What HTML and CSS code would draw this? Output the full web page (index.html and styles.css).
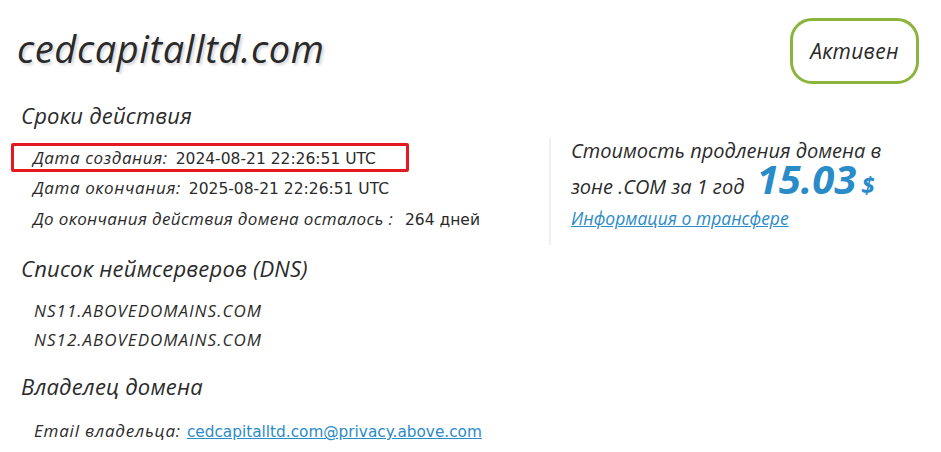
FILE: index.html
```html
<!DOCTYPE html>
<html lang="ru">
<head>
<meta charset="utf-8">
<title>cedcapitalltd.com</title>
<link rel="stylesheet" href="styles.css">
</head>
<body>
<div class="page">
  <header class="header">
    <h1 class="title">cedcapitalltd.com</h1>
    <div class="badge">Активен</div>
  </header>

  <h2 class="section-title section-first">Сроки действия</h2>
  <div class="terms">
    <div class="terms-left">
      <div class="row row-hl"><span class="label">Дата создания:</span><span class="value">2024-08-21 22:26:51 UTC</span></div>
      <div class="row"><span class="label">Дата окончания:</span><span class="value">2025-08-21 22:26:51 UTC</span></div>
      <div class="row"><span class="label label-tight">До окончания действия домена осталось :</span><span class="value">264 дней</span></div>
    </div>
    <div class="terms-right">
      <p class="price-text price-first">Стоимость продления домена в</p>
      <p class="price-text price-second">зоне .COM за 1 год <span class="price">15.03</span><span class="currency">$</span></p>
      <a class="transfer" href="#">Информация о трансфере</a>
    </div>
  </div>

  <h2 class="section-title">Список неймсерверов (DNS)</h2>
  <div class="ns-list">
    <div class="ns">NS11.ABOVEDOMAINS.COM</div>
    <div class="ns">NS12.ABOVEDOMAINS.COM</div>
  </div>

  <h2 class="section-title">Владелец домена</h2>
  <div class="owner">
    <span class="label label-wide">Email владельца:</span><a class="email" href="#">cedcapitalltd.com@privacy.above.com</a>
  </div>
</div>
</body>
</html>
```
FILE: styles.css
```css
html, body {
  margin: 0;
  padding: 0;
  background: #ffffff;
}
body {
  font-family: "Open Sans", "Noto Sans", sans-serif;
  color: #2b2b2b;
}
.page {
  padding: 17px 22px 0 17px;
}
.header {
  display: flex;
  justify-content: space-between;
  align-items: flex-start;
  height: 67px;
}
.title {
  margin: 8px 0 0 0;
  font-size: 38px;
  font-style: italic;
  font-weight: 500;
  line-height: 46px;
  letter-spacing: 0.6px;
  color: #2a2a2a;
  text-shadow: 2px 2px 3px rgba(0,0,0,0.18);
}
.badge {
  box-sizing: border-box;
  margin-top: 1px;
  width: 129px;
  height: 66px;
  border: 3px solid #8ab43a;
  border-radius: 22px;
  display: flex;
  align-items: center;
  justify-content: center;
  font-size: 21px;
  font-style: italic;
  letter-spacing: 0.3px;
  color: #2a2a2a;
}
.section-title {
  margin: 0 0 0 4px;
  font-size: 22px;
  font-style: italic;
  font-weight: 400;
  line-height: 28px;
  letter-spacing: 0.2px;
  color: #2b2b2b;
}
.section-first {
  margin-top: 17px;
}
.terms {
  display: flex;
  align-items: flex-start;
  margin-top: 8px;
  margin-bottom: 9px;
}
.terms-left {
  width: 538px;
  margin-left: -6px;
  padding-top: 6px;
}
.row {
  display: flex;
  align-items: baseline;
  height: 31px;
  line-height: 31px;
  padding-left: 22px;
  font-size: 17px;
}
.row-hl {
  display: inline-flex;
  box-sizing: border-box;
  width: 398px;
  height: 29px;
  line-height: 21px;
  border: 3px solid #e3191f;
  border-radius: 2px;
  padding-top: 1px;
  padding-left: 19px;
}
.label {
  font-style: italic;
  letter-spacing: 0.6px;
  color: #2b2b2b;
  margin-right: 8px;
}
.label-tight {
  letter-spacing: 0.35px;
  margin-right: 12px;
}
.label-wide {
  letter-spacing: 0.8px;
  margin-right: 6px;
}
.value {
  font-family: "DejaVu Sans", sans-serif;
  font-size: 15.5px;
  color: #2b2b2b;
}
.terms-right {
  border-left: 2px solid #f0f0f0;
  padding: 0 0 15px 20px;
}
.price-text {
  margin: 0;
  font-size: 20px;
  font-style: italic;
  color: #2b2b2b;
}
.price-first {
  line-height: 28px;
}
.price-second {
  margin-top: 5px;
  line-height: 33px;
}
.price {
  font-size: 40px;
  font-weight: 700;
  color: #2a8bc9;
  line-height: 0;
  margin-left: 7px;
}
.currency {
  font-size: 24px;
  font-weight: 700;
  color: #2a8bc9;
  line-height: 0;
  margin-left: 5px;
}
.transfer {
  display: block;
  margin-top: 3px;
  font-size: 17.5px;
  font-style: italic;
  color: #2a8bc9;
  text-decoration: underline;
  line-height: 24px;
}
.ns-list {
  padding: 14px 0 18px 17px;
}
.ns {
  font-size: 17px;
  font-style: italic;
  letter-spacing: 1px;
  line-height: 29px;
  color: #2b2b2b;
}
.owner {
  padding: 19px 0 0 17px;
  font-size: 17px;
  display: flex;
  align-items: baseline;
}
.email {
  font-family: "DejaVu Sans", sans-serif;
  font-size: 15.3px;
  color: #2a8bc9;
  text-decoration: underline;
}
```
